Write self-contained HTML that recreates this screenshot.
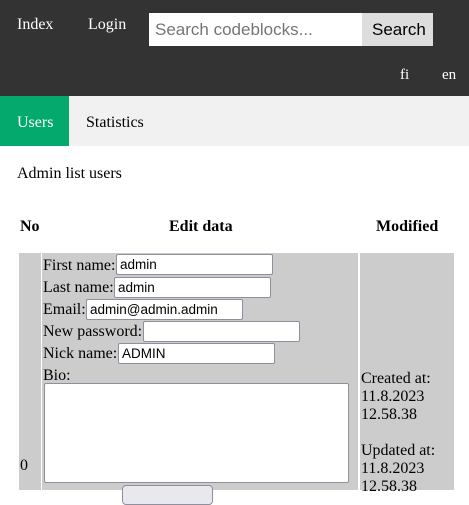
<!DOCTYPE html>
<html><head><style>
*{box-sizing:border-box}
body{margin:0;width:469px;height:490px;overflow:hidden;font-family:"Liberation Serif",serif;font-size:16px;background:#fff}
.top{background:#333;height:96px;position:relative;color:#fff}
.top a{position:absolute;color:#fff;text-decoration:none}
.si{position:absolute;left:149px;top:13px;width:213px;height:33px;background:#fff;font-family:"Liberation Sans",sans-serif;font-size:17px;color:#757575;padding:7px 6px}
.sb{position:absolute;left:362px;top:13px;width:71px;height:33px;background:#ddd;font-family:"Liberation Sans",sans-serif;font-size:17px;color:#000;padding:7px 10px}
.tabs{background:#f1f1f1;height:50px;position:relative}
.tabs div{position:absolute;top:0;height:50px;line-height:54px}
.inp{position:absolute;height:21px;width:157px;background:#fff;border:1px solid #8f8f9d;border-radius:2px;font-family:"Liberation Sans",sans-serif;font-size:13.5px;padding:1px 3px;line-height:18px}
.t{position:absolute}
</style></head><body>
<div class="top">
<a style="left:17px;top:16px">Index</a>
<a style="left:88px;top:16px">Login</a>
<div class="si">Search codeblocks...</div>
<div class="sb">Search</div>
<a style="left:400px;top:67px;font-size:15px">fi</a>
<a style="left:442px;top:67px;font-size:15px">en</a>
</div>
<div class="tabs">
<div style="left:0;width:69px;background:#04aa6d;color:#fff;padding-left:17px">Users</div>
<div style="left:86px">Statistics</div>
</div>
<div class="t" style="left:17px;top:165px">Admin list users</div>
<div class="t" style="left:20px;top:218px;font-weight:bold">No</div>
<div class="t" style="left:169px;top:218px;font-weight:bold">Edit data</div>
<div class="t" style="left:376px;top:218px;font-weight:bold">Modified</div>
<div class="t" style="left:19px;top:253px;width:22px;height:237px;background:#ccc"></div>
<div class="t" style="left:42px;top:253px;width:316px;height:237px;background:#ccc"></div>
<div class="t" style="left:360px;top:253px;width:94px;height:237px;background:#ccc"></div>
<div class="t" style="left:20px;top:457px">0</div>
<div class="t" style="left:43px;top:257px">First name:</div><div class="inp" style="left:116px;top:254px">admin</div>
<div class="t" style="left:43px;top:279px">Last name:</div><div class="inp" style="left:114px;top:277px">admin</div>
<div class="t" style="left:43px;top:301px">Email:</div><div class="inp" style="left:86px;top:299px">admin@admin.admin</div>
<div class="t" style="left:43px;top:323px">New password:</div><div class="inp" style="left:143px;top:321px"></div>
<div class="t" style="left:43px;top:345px">Nick name:</div><div class="inp" style="left:118px;top:343px">ADMIN</div>
<div class="t" style="left:43px;top:367px">Bio:</div>
<div class="inp" style="left:44px;top:383px;width:305px;height:100px"></div>
<div class="inp" style="left:122px;top:485px;width:91px;height:20px;background:#e9e9ed;border-radius:4px"></div>
<div class="t" style="left:361px;top:370px;line-height:18px">Created at:<br>11.8.2023<br>12.58.38<br><br>Updated at:<br>11.8.2023<br>12.58.38</div>
</body></html>
